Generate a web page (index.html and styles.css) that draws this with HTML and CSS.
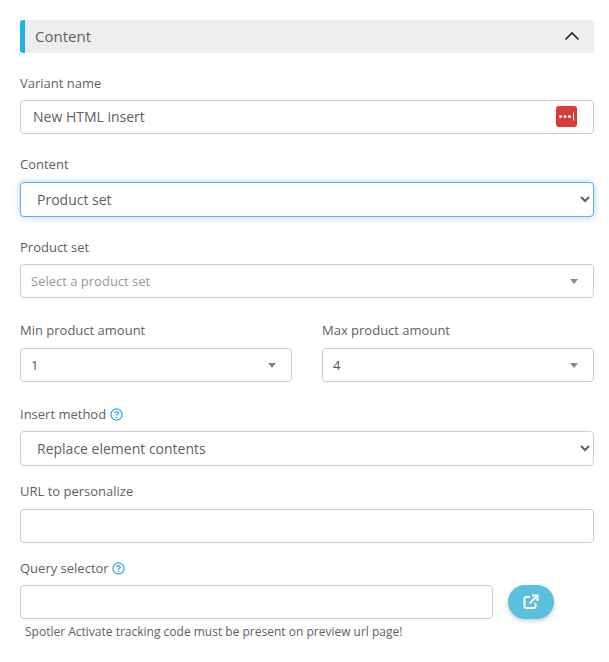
FILE: index.html
```html
<!DOCTYPE html>
<html lang="en">
<head>
<meta charset="utf-8">
<title>Content</title>
<link rel="stylesheet" href="styles.css">
</head>
<body>
<main class="panel">
  <header class="section-head">
    <span class="section-title">Content</span>
    <svg class="chevron-up" viewBox="0 0 16 10" width="16" height="10"><path d="M1.500 8.500 8 2l6.500 6.500" fill="none" stroke="#222" stroke-width="1.600"/></svg>
  </header>

  <div class="field field-first">
    <label class="label">Variant name</label>
    <div class="input-wrap">
      <input class="control text-input" type="text" value="New HTML insert">
      <span class="lastpass"><svg viewBox="0 0 21 21" width="21" height="21"><circle cx="4.500" cy="10.500" r="1.500" fill="#fff"/><circle cx="9" cy="10.500" r="1.500" fill="#fff"/><circle cx="13.500" cy="10.500" r="1.500" fill="#fff"/><rect x="17" y="6.500" width="1" height="8" fill="#fff"/></svg></span>
    </div>
  </div>

  <div class="field field-select-a">
    <label class="label">Content</label>
    <select class="control native focused"><option>Product set</option></select>
  </div>

  <div class="field field-b">
    <label class="label">Product set</label>
    <div class="combo"><span class="placeholder">Select a product set</span><i class="caret"></i></div>
  </div>

  <div class="columns">
    <div class="field">
      <label class="label">Min product amount</label>
      <div class="combo"><span class="value">1</span><i class="caret"></i></div>
    </div>
    <div class="field">
      <label class="label">Max product amount</label>
      <div class="combo"><span class="value">4</span><i class="caret"></i></div>
    </div>
  </div>

  <div class="field field-c">
    <label class="label">Insert method <svg class="help" viewBox="0 0 14 14" width="13" height="13"><circle cx="7" cy="7" r="6" fill="none" stroke="#2ba6e0" stroke-width="1.300"/><path d="M5.100 5.500C5.200 4.400 6 3.800 7 3.800s1.900.6 1.900 1.600c0 1.300-1.900 1.400-1.900 2.800" fill="none" stroke="#2ba6e0" stroke-width="1.300"/><circle cx="7" cy="10.100" r=".8" fill="#2ba6e0"/></svg></label>
    <select class="control native"><option>Replace element contents</option></select>
  </div>

  <div class="field field-d field-url">
    <label class="label">URL to personalize</label>
    <input class="control text-input" type="text">
  </div>

  <div class="field field-d">
    <label class="label">Query selector <svg class="help" viewBox="0 0 14 14" width="13" height="13"><circle cx="7" cy="7" r="6" fill="none" stroke="#2ba6e0" stroke-width="1.300"/><path d="M5.100 5.500C5.200 4.400 6 3.800 7 3.800s1.900.6 1.900 1.600c0 1.300-1.900 1.400-1.900 2.800" fill="none" stroke="#2ba6e0" stroke-width="1.300"/><circle cx="7" cy="10.100" r=".8" fill="#2ba6e0"/></svg></label>
    <div class="query-row">
      <input class="control text-input" type="text">
      <button class="open-btn" type="button"><svg viewBox="0 0 16 16" width="16" height="16"><path d="M7 3H3a1.500 1.500 0 0 0-1.500 1.500v8A1.500 1.500 0 0 0 3 14h8a1.500 1.500 0 0 0 1.500-1.500V9" fill="none" stroke="#fff" stroke-width="2"/><path d="M6.500 9.500 13.500 2.500M9 1.500h5.500V7" fill="none" stroke="#fff" stroke-width="2"/></svg></button>
    </div>
    <p class="note">Spotler Activate tracking code must be present on preview url page!</p>
  </div>
</main>
</body>
</html>
```
FILE: styles.css
```css
* { box-sizing: border-box; }
html, body { margin: 0; background: #fff; }
body {
  font-family: "Open Sans", sans-serif;
  font-size: 14px;
  color: #555;
  width: 609px;
  height: 662px;
  overflow: hidden;
}
.panel { padding: 20px 15px 0 20px; }
.section-head {
  height: 33px;
  background: #eee;
  border-left: 5px solid #1fb0e8;
  border-radius: 3px;
  padding: 0 14px 2px 10px;
  display: flex;
  align-items: center;
  justify-content: space-between;
}
.section-title { font-size: 15px; color: #5f5f5f; }
.label {
  display: block;
  font-size: 13px;
  line-height: 18px;
  color: #5f5f5f;
  margin-bottom: 8px;
}
.field-first { margin-top: 21px; }
.field-select-a { margin-top: 21px; }
.field-select-a .label { margin-bottom: 9px; }
.field-b { margin-top: 21px; }
.field-c { margin-top: 23px; }
.field-d { margin-top: 16px; }
.field-url .label { margin-bottom: 9px; }
.columns .label { margin-bottom: 9px; }
.control {
  display: block;
  width: 100%;
  background: #fff;
  border: 1px solid #ccc;
  border-radius: 4px;
  font-family: "Open Sans", sans-serif;
  font-size: 14px;
  color: #5f5f5f;
  outline: none;
}
.text-input { height: 34px; padding: 0 12px 2px; }
.native { height: 35px; padding: 0 12px; }
.focused { border-color: #66afe9; box-shadow: 0 0 6px rgba(102,175,233,.6); }
.input-wrap { position: relative; }
.lastpass {
  position: absolute;
  right: 17px;
  top: 6px;
  width: 21px;
  height: 21px;
  background: #d93a3a;
  border-radius: 3px;
  display: flex;
}
.combo {
  height: 34px;
  border: 1px solid #ccc;
  border-radius: 4px;
  display: flex;
  align-items: center;
  justify-content: space-between;
  padding: 0 15px 0 10px;
  font-size: 13px;
}
.placeholder { color: #999; }
.value { color: #555; }
.caret {
  width: 0;
  height: 0;
  border-left: 4px solid transparent;
  border-right: 4px solid transparent;
  border-top: 5px solid #888;
}
.columns {
  display: grid;
  grid-template-columns: 1fr 1fr;
  column-gap: 30px;
  margin-top: 23px;
}
.help { vertical-align: -2px; margin-left: 0; }
.query-row { display: flex; align-items: center; gap: 15px; padding-right: 40px; }
.query-row .text-input { flex: 1; min-width: 0; }
.open-btn {
  flex: none;
  width: 46px;
  height: 34px;
  border: 0;
  border-radius: 17px;
  background: #5bc0de;
  box-shadow: 0 2px 4px rgba(0,0,0,.2);
  display: flex;
  align-items: center;
  justify-content: center;
  padding: 0;
}
.note { margin: 4px 0 0 5px; font-size: 12px; line-height: 18px; color: #5f5f5f; }
```
